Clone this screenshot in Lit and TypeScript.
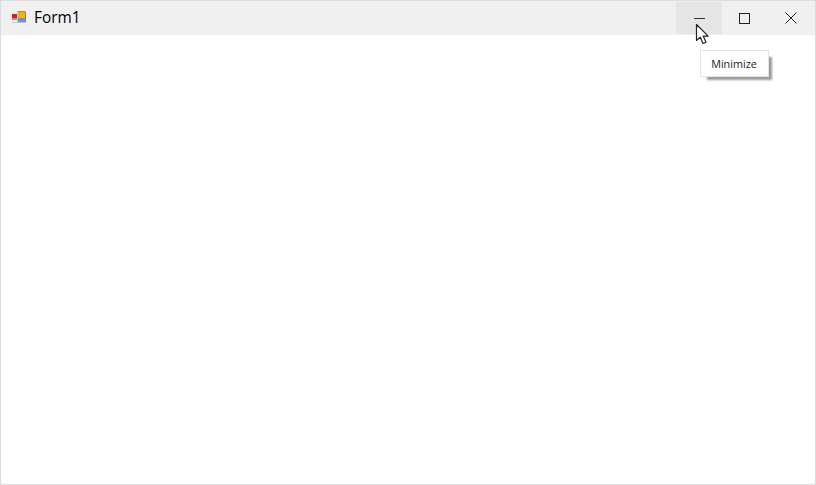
import { LitElement, html, css } from 'lit';
import { customElement } from 'lit/decorators.js';

@customElement('app-root')
export class AppRoot extends LitElement {
  static styles = css`
    :host {
      display: block;
      width: 816px;
      height: 485px;
      font-family: 'Open Sans', 'Liberation Sans', sans-serif;
    }
    .window {
      position: relative;
      box-sizing: border-box;
      width: 816px;
      height: 485px;
      display: flex;
      flex-direction: column;
      background: #fff;
      border: 1px solid #dcdcdc;
    }
    .titlebar {
      height: 34px;
      display: flex;
      align-items: center;
      background: #f0f0f0;
    }
    .app-icon {
      display: block;
      margin-left: 10px;
    }
    .title {
      margin-left: 7px;
      margin-bottom: 2px;
      flex: 1;
      font-size: 15.4px;
      color: #000;
    }
    .controls {
      display: flex;
      height: 32px;
      margin-top: 1px;
      align-self: flex-start;
      margin-right: 1px;
    }
    .btn {
      width: 46px;
      height: 32px;
      display: flex;
      align-items: center;
      justify-content: center;
    }
    .btn.hover {
      background: #e5e5e5;
    }
    .btn.max {
      padding-right: 2px;
      box-sizing: border-box;
    }
    .body {
      flex: 1;
    }
    .cursor {
      position: absolute;
      left: 694px;
      top: 22px;
    }
    .tooltip {
      position: absolute;
      left: 699px;
      top: 49px;
      box-sizing: border-box;
      width: 69px;
      height: 27px;
      display: flex;
      align-items: center;
      justify-content: center;
      padding: 0 1px 1px 0;
      background: #fff;
      border: 1px solid #e4e4e4;
      box-shadow: 5px 5px 2px -2px #9a9a9a;
      font-size: 10.8px;
      color: #222;
    }
  `;

  render() {
    return html`
      <div class="window">
        <div class="titlebar">
          <svg class="app-icon" width="16" height="16" viewBox="0 0 16 16">
            <rect x="1" y="4" width="5" height="6" fill="#c8242c" />
            <rect x="1" y="8" width="5" height="2" fill="#d88080" />
            <rect x="7" y="1" width="7" height="7" fill="#f0b010" />
            <rect x="7" y="8" width="7" height="5" fill="#5c94ec" />
            <path d="M6.5 1.5h8v11" fill="none" stroke="#b08a30" />
            <path d="M6.5 1.5v11" fill="none" stroke="#c8c8c8" />
            <path d="M1 12.5h14" fill="none" stroke="#c4c4c4" />
          </svg>
          <div class="title">Form1</div>
          <div class="controls">
            <div class="btn hover">
              <svg width="11" height="10" viewBox="0 0 11 10"><path d="M0 5.5h11" stroke="#333" /></svg>
            </div>
            <div class="btn max">
              <svg width="11" height="11" viewBox="0 0 11 11"><rect x="0.5" y="0.5" width="10" height="10" fill="none" stroke="#222" /></svg>
            </div>
            <div class="btn">
              <svg width="12" height="12" viewBox="0 0 12 12"><path d="M0.5 0.5l11 11M11.5 0.5l-11 11" stroke="#222" /></svg>
            </div>
          </div>
        </div>
        <div class="body"></div>
        <svg class="cursor" width="16" height="24" viewBox="0 0 16 24">
          <path d="M1.5 1.5v16l3.7-3.4 2.8 6.4 3-1.3-2.8-6.1h5z" fill="#fff" stroke="#222" stroke-width="1.2" stroke-linejoin="round" />
        </svg>
        <div class="tooltip">Minimize</div>
      </div>
    `;
  }
}
